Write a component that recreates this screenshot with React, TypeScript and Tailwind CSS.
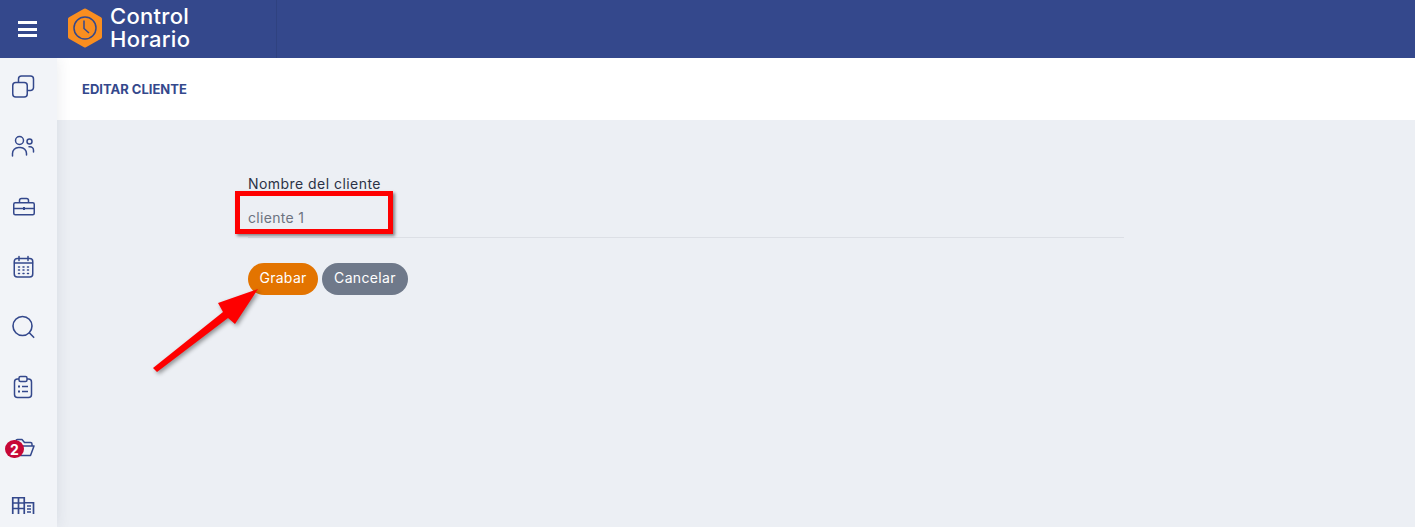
function CopyIcon() {
  return (
    <svg width="24" height="24" viewBox="0 0 24 24" fill="none" stroke="currentColor" strokeWidth="1.5">
      <rect x="1.750" y="7.500" width="14.500" height="14.500" rx="3" />
      <path d="M7.500 7.500V4a3 3 0 0 1 3-3h9a3 3 0 0 1 3 3v8.500a3 3 0 0 1-3 3h-3.300" />
    </svg>
  );
}

function PeopleIcon() {
  return (
    <svg width="24" height="24" viewBox="0 0 24 24" fill="none" stroke="currentColor" strokeWidth="1.5" strokeLinecap="round">
      <circle cx="8.500" cy="5.500" r="4" />
      <circle cx="18.500" cy="6.500" r="2.500" />
      <path d="M1.500 21v-2.500a6 6 0 0 1 6-6h2a6 6 0 0 1 6 6V20" />
      <path d="M18 11.800h1a3.500 3.500 0 0 1 3.500 3.500V17" />
    </svg>
  );
}

function CaseIcon() {
  return (
    <svg width="24" height="24" viewBox="0 0 24 24" fill="none" stroke="currentColor" strokeWidth="1.5">
      <rect x="2.750" y="7.750" width="20.500" height="12" rx="1.500" />
      <path d="M8.500 7.500V5.500a2 2 0 0 1 2-2h5a2 2 0 0 1 2 2v2" />
      <path d="M3 13.500h20" />
      <path d="M13 12v3" strokeWidth="2" />
    </svg>
  );
}

function CalendarIcon() {
  return (
    <svg width="24" height="24" viewBox="0 0 24 24" fill="none" stroke="currentColor" strokeWidth="1.500" strokeLinecap="round">
      <rect x="3.250" y="3.500" width="18.500" height="18.500" rx="3" />
      <path d="M3.500 8h18M8 1.500v4M17 1.500v4" />
      <path d="M7.500 12h1M12 12h1M16.500 12h1M7.500 15h1M12 15h1M16.500 15h1M7.500 18.500h1M12 18.500h1M16.500 18.500h1" />
    </svg>
  );
}

function SearchIcon() {
  return (
    <svg width="24" height="24" viewBox="0 0 24 24" fill="none" stroke="currentColor" strokeWidth="1.600" strokeLinecap="round">
      <circle cx="11.500" cy="11" r="9.500" />
      <path d="M18.500 18l4.200 4.300" />
    </svg>
  );
}

function ClipboardIcon() {
  return (
    <svg width="24" height="24" viewBox="0 0 24 24" fill="none" stroke="currentColor" strokeWidth="1.500">
      <path d="M8 4H6.500a3 3 0 0 0-3 3v12.500a3 3 0 0 0 3 3h11a3 3 0 0 0 3-3V7a3 3 0 0 0-3-3H16" />
      <rect x="8" y="1.500" width="8" height="5" rx="1.500" />
      <path d="M7 11.500h2M7 16.500h2" strokeWidth="2" />
      <path d="M11 11.500h6M11 16.500h6" />
    </svg>
  );
}

function FolderIcon() {
  return (
    <svg width="24" height="24" viewBox="0 0 24 24" fill="none" stroke="currentColor" strokeWidth="1.500" strokeLinejoin="round">
      <path d="M5 12V6a1.500 1.500 0 0 1 1.500-1.500h4.500l2.500 3h6a1.500 1.500 0 0 1 1.500 1.500v2" />
      <path d="M6 20.500h13.500l3.500-9.500H12" />
    </svg>
  );
}

function BuildingIcon() {
  return (
    <svg width="24" height="24" viewBox="0 0 24 24" fill="none" stroke="currentColor" strokeWidth="1.700">
      <path d="M1.750 19V2.750h11.500V19M1.750 8h11.500M1.750 13.500h11.500M7.500 2.750V19" />
      <path d="M13.500 7.750h9V19M16 11h4M16 14h4M16 17h4" />
    </svg>
  );
}

function Logo() {
  return (
    <svg width="36" height="40" viewBox="0 0 36 40">
      <path d="M18 2.500 33 11V29L18 37.500 3 29V11Z" fill="#f98e20" stroke="#f98e20" strokeWidth="4" strokeLinejoin="round" />
      <circle cx="18" cy="20" r="11" fill="none" stroke="#34488c" strokeWidth="1.500" />
      <path d="M17 12.500V20.500L22 25" fill="none" stroke="#34488c" strokeWidth="1.500" />
    </svg>
  );
}

const menu = [
  <CopyIcon />,
  <PeopleIcon />,
  <CaseIcon />,
  <CalendarIcon />,
  <SearchIcon />,
  <ClipboardIcon />,
  <FolderIcon />,
  <BuildingIcon />,
];

function App() {
  return (
    <div className="relative h-[527px] overflow-hidden bg-[#eceff4] font-['Inter',sans-serif]">
      <header className="relative z-20 flex h-[58px] bg-[#34488c] text-white">
        <div className="flex w-[57px] items-center justify-center pr-[2px]">
          <div className="flex w-[19px] flex-col gap-[3.500px]">
            <span className="h-[3px] bg-white" />
            <span className="h-[3px] bg-white" />
            <span className="h-[3px] bg-white" />
          </div>
        </div>
        <div className="flex w-[220px] items-center gap-[7px] border-r border-[#2f4280] pl-[10px]">
          <div className="mb-[3px]">
            <Logo />
          </div>
          <div className="mb-[2px] text-[22px] leading-[23px] font-medium tracking-[0.3px]">
            Control
            <br />
            Horario
          </div>
        </div>
      </header>

      <div className="flex h-[469px]">
        <aside className="relative z-10 flex w-[57px] flex-col items-center gap-[36px] overflow-visible bg-[#f2f4f8] pt-[17px] pr-[11px] text-[#34488c] shadow-[0_0_14px_rgba(40,50,80,0.1)]">
          {menu.map((icon, i) => (
            <div key={i} className="relative flex h-[24px] w-[24px] shrink-0 items-center justify-center">
              {icon}
              {i === 6 && (
                <span className="absolute top-[5px] left-[-6px] flex h-[18px] w-[19px] items-center justify-center rounded-full bg-[#c70736] text-[14px] font-bold text-white">
                  2
                </span>
              )}
            </div>
          ))}
        </aside>

        <main className="flex-1">
          <div className="flex h-[62px] items-center bg-white pt-[1px] pl-[25px] text-[13px] font-bold text-[#34488c]">
            EDITAR CLIENTE
          </div>
          <div className="pt-[55px] pl-[191px]">
            <label className="block text-[14px] leading-[18px] tracking-[0.45px] text-[#2b3245]">Nombre del cliente</label>
            <div className="flex h-[45px] w-[876px] items-end border-b border-[#dcdfe5] pb-[10px] text-[14px] leading-[18px] tracking-[0.3px] text-[#6c7380]">
              cliente 1
            </div>
            <div className="mt-[25px] flex gap-[4px]">
              <button className="h-[32px] w-[70px] rounded-full bg-[#e37400] pb-[3px] text-[14px] tracking-[0.3px] text-white">Grabar</button>
              <button className="h-[32px] w-[86px] rounded-full bg-[#6f798a] pb-[3px] text-[14px] tracking-[0.35px] text-white">Cancelar</button>
            </div>
          </div>
        </main>
      </div>

      {/* annotations */}
      <div className="absolute top-[191px] left-[235px] z-30 h-[43px] w-[158px] border-[5px] border-[#fe0000] shadow-[2px_2px_3px_rgba(0,0,0,0.45)]" />
      <svg className="absolute top-[285px] left-[145px] z-30" width="125" height="95" viewBox="0 0 125 95">
        <path
          d="M8 83 L78 27 L73 18 L113 4 L90 39 L83 33 L12 87 Z"
          fill="#fe0000"
          style={{ filter: "drop-shadow(2px 2px 2px rgba(0,0,0,0.4))" }}
        />
      </svg>
    </div>
  );
}

export default App;
